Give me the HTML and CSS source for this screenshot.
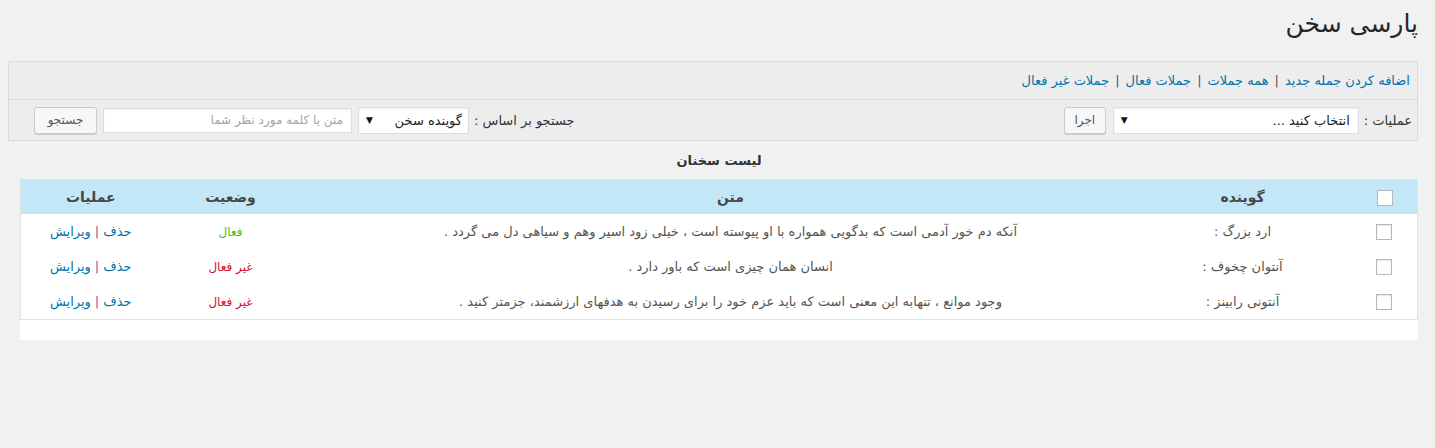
FILE: index.html
```html
<!DOCTYPE html>
<html lang="fa" dir="rtl">
<head>
<meta charset="utf-8">
<title>پارسی سخن</title>
<link rel="stylesheet" href="styles.css">
</head>
<body>
<div class="wrap">
  <h1 class="page-title">پارسی سخن</h1>
  <div class="toolbox">
    <div class="toolbox-links">
      <a href="#">اضافه کردن جمله جدید</a><span class="sep">|</span><a href="#">همه جملات</a><span class="sep">|</span><a href="#">جملات فعال</a><span class="sep">|</span><a href="#">جملات غیر فعال</a>
    </div>
    <div class="toolbox-actions">
      <div class="group">
        <span class="label">عملیات :</span>
        <div class="fake-select wide"><span>انتخاب کنید ...</span><span class="arrow">▼</span></div>
        <button class="btn btn-run">اجرا</button>
      </div>
      <div class="group">
        <span class="label">جستجو بر اساس :</span>
        <div class="fake-select narrow"><span>گوینده سخن</span><span class="arrow">▼</span></div>
        <input class="text-input" type="text" placeholder="متن یا کلمه مورد نظر شما">
        <button class="btn btn-search">جستجو</button>
      </div>
    </div>
  </div>
  <h2 class="list-title">لیست سخنان</h2>
  <div class="table-box">
    <table class="quotes">
      <colgroup>
        <col class="c-cb"><col class="c-author"><col class="c-text"><col class="c-status"><col class="c-ops">
      </colgroup>
      <thead>
        <tr>
          <th class="cb"><span class="check"></span></th>
          <th>گوینده</th>
          <th>متن</th>
          <th>وضعیت</th>
          <th>عملیات</th>
        </tr>
      </thead>
      <tbody>
        <tr>
          <td class="cb"><span class="check row"></span></td>
          <td>ارد بزرگ :</td>
          <td>آنکه دم خور آدمی است که بدگویی همواره با او پیوسته است ، خیلی زود اسیر وهم و سیاهی دل می گردد .</td>
          <td class="on">فعال</td>
          <td><a href="#">حذف</a><span class="bar">|</span><a href="#">ویرایش</a></td>
        </tr>
        <tr>
          <td class="cb"><span class="check row"></span></td>
          <td>آنتوان چخوف :</td>
          <td>انسان همان چیزی است که باور دارد .</td>
          <td class="off">غیر فعال</td>
          <td><a href="#">حذف</a><span class="bar">|</span><a href="#">ویرایش</a></td>
        </tr>
        <tr>
          <td class="cb"><span class="check row"></span></td>
          <td>آنتونی رابینز :</td>
          <td>وجود موانع ، تنهابه این معنی است که باید عزم خود را برای رسیدن به هدفهای ارزشمند، جزمتر کنید .</td>
          <td class="off">غیر فعال</td>
          <td><a href="#">حذف</a><span class="bar">|</span><a href="#">ویرایش</a></td>
        </tr>
      </tbody>
    </table>
  </div>
</div>
</body>
</html>
```

FILE: styles.css
```css
html, body {
  margin: 0;
  padding: 0;
  background: #f1f1f1;
}
body {
  font-family: Tahoma, "DejaVu Sans", sans-serif;
  font-size: 13px;
  color: #555;
  direction: rtl;
}
.wrap {
  padding: 0 17px 0 8px;
}
.page-title {
  margin: 0;
  padding: 9px 0 0 0;
  height: 61px;
  box-sizing: border-box;
  font-size: 25px;
  font-weight: 400;
  line-height: 30px;
  color: #23282d;
}
.toolbox {
  border: 1px solid #dcdcdc;
  background: #ededed;
}
.toolbox-links {
  height: 37px;
  display: flex;
  align-items: center;
  padding-right: 7px;
  border-bottom: 1px solid #dcdcdc;
  font-size: 13px;
}
.toolbox-links a {
  color: #0073aa;
  text-decoration: none;
}
.toolbox-links .sep {
  color: #555;
  margin: 0 6px;
}
.toolbox-actions {
  height: 40px;
  display: flex;
  align-items: center;
  justify-content: space-between;
  padding: 0 5px 0 25px;
}
.group {
  display: flex;
  align-items: center;
}
.label {
  font-size: 13px;
  color: #333;
  margin-left: 5px;
}
.fake-select {
  height: 27px;
  box-sizing: border-box;
  background: #fff;
  border: 1px solid #ddd;
  box-shadow: inset 0 1px 2px rgba(0,0,0,0.07);
  display: flex;
  align-items: center;
  justify-content: space-between;
  padding: 0 8px 0 7px;
  color: #222;
  font-size: 13px;
  margin-left: 7px;
}
.fake-select .arrow {
  font-size: 9px;
  color: #111;
}
.fake-select.wide {
  width: 246px;
}
.fake-select.narrow {
  width: 111px;
  padding-right: 6px;
  margin-left: 6px;
}
.text-input {
  width: 249px;
  height: 25px;
  box-sizing: border-box;
  border: 1px solid #ddd;
  box-shadow: inset 0 1px 2px rgba(0,0,0,0.07);
  background: #fff;
  font-family: inherit;
  font-size: 12px;
  padding: 0 8px;
  margin: 0 0 0 6px;
  direction: rtl;
}
.text-input::placeholder {
  color: #a3a3a3;
}
.btn {
  height: 27px;
  box-sizing: border-box;
  background: #f7f7f7;
  border: 1px solid #ccc;
  border-radius: 3px;
  box-shadow: 0 1px 0 #ccc;
  color: #555;
  font-family: inherit;
  font-size: 12px;
  padding: 0 10px;
  margin: 0;
  cursor: pointer;
}
.btn-run {
  width: 42px;
  padding: 0;
}
.btn-search {
  width: 63px;
  padding: 0;
}
.list-title {
  margin: 0;
  height: 38px;
  display: flex;
  align-items: center;
  justify-content: center;
  font-size: 13px;
  font-weight: 700;
  color: #333;
  padding-left: 12px;
}
.table-box {
  margin-left: 12px;
  background: #fff;
  padding-bottom: 20px;
}
.quotes {
  width: 100%;
  table-layout: fixed;
  border-collapse: collapse;
  border: 1px solid #e1e1e1;
}
.c-cb { width: 93px; }
.c-author { width: 164px; }
.c-text { width: 860px; }
.c-status { width: 140px; }
.c-ops { width: 140px; }
.quotes th {
  background: #c3e7f6;
  height: 34px;
  padding: 0;
  font-size: 14px;
  font-weight: 700;
  color: #464646;
  text-align: center;
}
.quotes td {
  height: 35px;
  padding: 0;
  text-align: center;
  font-size: 13px;
  color: #555;
}
.quotes td.on,
.quotes td.off {
  font-size: 12px;
}
.quotes .cb {
  text-align: right;
  padding-right: 24px;
}
.check {
  display: inline-block;
  width: 16px;
  height: 16px;
  box-sizing: border-box;
  border: 1px solid #b4b9be;
  background: #fff;
  vertical-align: middle;
}
.check.row {
  margin-right: 1px;
  box-shadow: inset 0 1px 2px rgba(0,0,0,0.1);
}
.quotes td a {
  color: #0073aa;
  text-decoration: none;
}
.quotes .bar {
  color: #9c4f8c;
  margin: 0 4px;
}
.quotes .on {
  color: #44c40a;
}
.quotes .off {
  color: #d4102e;
}
```
